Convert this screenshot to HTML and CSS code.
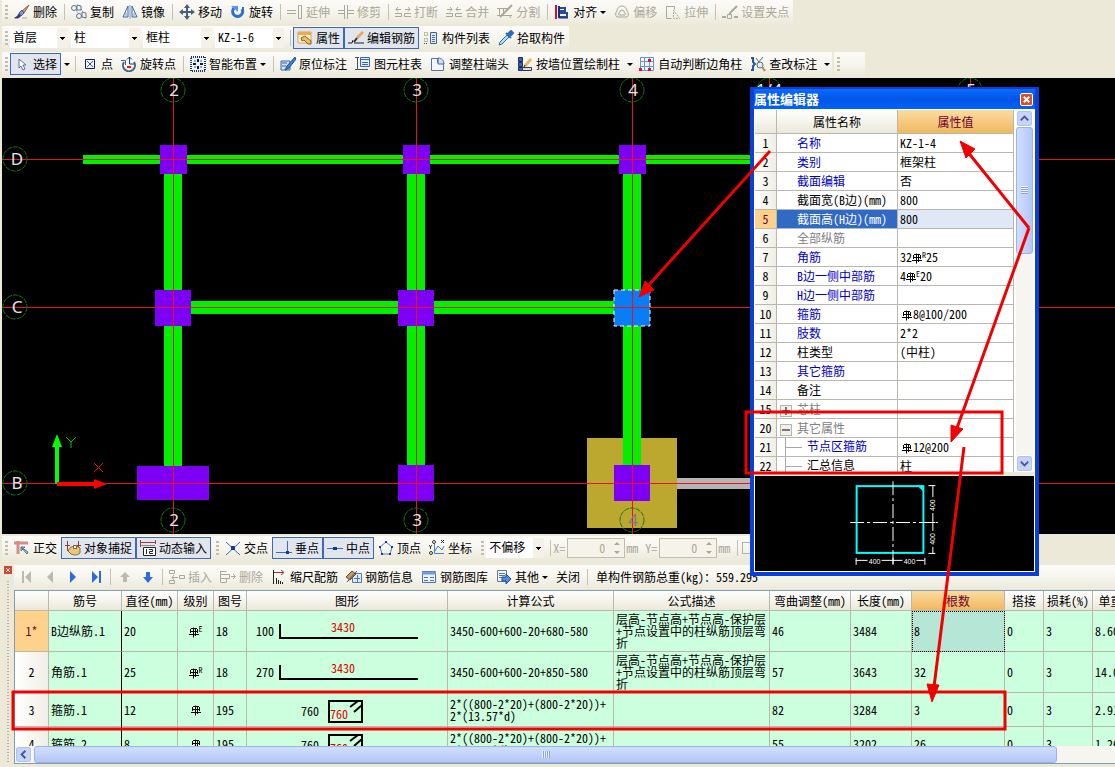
FILE: index.html
```
<!DOCTYPE html>
<html lang="zh-CN">
  <head>
    <meta charset="utf-8">
    <title>钢筋抽样</title>
    <link rel="stylesheet" href="styles.css">
  </head>

  <body>

    <!-- icon sprite -->
    <svg class="sprite">
      <symbol id="brush" viewBox="0 0 16 16">
        <path d="M15 1L8 7l2 2z" fill="#d9a070" stroke="#8a6048"/>
        <path d="M8 6L5 9l2 3 3-3z" fill="#8b95e0" stroke="#4550a8"/>
        <path d="M5 9l-2 3-3 2c2 1 5 1 7-2z" fill="#3c3c74"/>
        <path d="M8 14h5" stroke="#b9a0a0"/>
      </symbol>
      <symbol id="copy" viewBox="0 0 16 16" fill="none" stroke="#5f7391">
        <circle cx="3" cy="4" r="2.5"/><path d="M6 1l4 1v4H6z"/>
        <circle cx="8" cy="12" r="2.5"/><path d="M11 8l4 1v5l-4-1z"/><path d="M5 6l2 3M10 5l2 3" stroke-dasharray="1 1"/>
      </symbol>
      <symbol id="mirror" viewBox="0 0 16 16" fill="none" stroke="#3c66a8">
        <path d="M6 2v11H1zM10 2v11h5z"/><path d="M8 1v14" stroke="#7c9fd0"/><path d="M4 9v3M12 9v3" stroke="#7c9fd0"/>
      </symbol>
      <symbol id="move" viewBox="0 0 16 16" fill="#44607c">
        <path d="M7 3h2v10H7zM3 7h10v2H3z"/><path d="M8 0l3 4H5zM8 16l3-4H5zM0 8l4-3v6zM16 8l-4-3v6z"/>
      </symbol>
      <symbol id="rotate" viewBox="0 0 16 16">
        <path d="M4 4a5 5 0 1 0 8 1" fill="none" stroke="#2f6fd0" stroke-width="3"/>
        <path d="M1 2h7v6z" fill="#5b94e8"/><path d="M13 3v3" stroke="#2f6fd0" stroke-width="2"/>
      </symbol>
      <symbol id="extend" viewBox="0 0 16 16" fill="none" stroke="#aaa899">
        <path d="M0 6.500h9M0 9.500h9M11.500 1.500h3v13h-3z"/>
      </symbol>
      <symbol id="trim" viewBox="0 0 16 16" fill="none" stroke="#aaa899">
        <path d="M0 6.500h6M0 9.500h6M10 6.500h6M10 9.500h6M6.500 1v14M9.500 1v14"/>
      </symbol>
      <symbol id="break" viewBox="0 0 16 16" fill="none" stroke="#aaa899">
        <path d="M0 9.500h6.500v3H0M16 9.500H9.500v3H16"/><path d="M1 5.500h5M10 5.500h5M3 3L1 5.500l2 2M13 3l2 2.500-2 2"/>
      </symbol>
      <symbol id="merge" viewBox="0 0 16 16" fill="none" stroke="#aaa899">
        <path d="M0 9.500h6.500v3H0M16 9.500H9.500v3H16"/><path d="M1 5.500h5M10 5.500h5M4 3l2 2.500-2 2M12 3l-2 2.500 2 2"/>
      </symbol>
      <symbol id="split" viewBox="0 0 16 16" fill="none" stroke="#aaa899">
        <path d="M0 4.500h12M0 11.500h15M2.500 4v8M6.500 4v8M12 11l2 3"/><path d="M15 1L7 9l-4 4" stroke-width="2"/>
      </symbol>
      <symbol id="align" viewBox="0 0 16 16" fill="none">
        <path d="M2 1v14" stroke="#d01030" stroke-width="2"/><path d="M5 2v12" stroke="#15307c" stroke-width="2"/>
        <path d="M6 4h5v3H6M6 9h7v4H6" stroke="#274a9c" stroke-width="2"/><path d="M5 14h9" stroke="#15307c"/>
      </symbol>
      <symbol id="offset" viewBox="0 0 16 16" fill="none" stroke="#aaa899">
        <path d="M3 13a4 4 0 0 1 0-6 5 5 0 0 1 10 0 4 4 0 0 1 0 6z"/><path d="M5 11a2 2 0 0 1 1-3 2 2 0 0 1 4 0 2 2 0 0 1 1 3z"/>
      </symbol>
      <symbol id="stretch" viewBox="0 0 16 16" fill="none" stroke="#aaa899">
        <path d="M1.500 14.500v-12h8v3M1.500 14.500h5"/><path d="M8.500 6l6 8.500h-6z" stroke-dasharray="2 1"/>
      </symbol>
      <symbol id="grippt" viewBox="0 0 16 16" fill="none" stroke="#aaa899">
        <path d="M0 13h4M12 13h4" stroke-width="2"/><path d="M15 2L9 8l-2 3" stroke-width="2"/><path d="M5.500 10.500h4v4h-4z"/>
      </symbol>
      <symbol id="props" viewBox="0 0 16 16">
        <path d="M1 2h13v11H1z" fill="#fff3d8" stroke="#e0a050"/><path d="M1 2h13v3H1z" fill="#f0a848"/>
        <path d="M4 8l4-2 6 5v3h-3L7 10l-2 1z" fill="#f0c060" stroke="#8a5a20"/>
      </symbol>
      <symbol id="editbar" viewBox="0 0 16 16" fill="none">
        <path d="M0 13h4l1-3M6 13h10" stroke="#1c1c1c"/>
        <path d="M15 2L9 8" stroke="#e8a860" stroke-width="3"/><path d="M9 8l-3 4" stroke="#303030" stroke-width="2"/>
      </symbol>
      <symbol id="list" viewBox="0 0 16 16" fill="none">
        <path d="M1.500 2.500h3v3h-3zM1.500 8.500h3v3h-3z" stroke="#78904c" stroke-dasharray="1 1"/><path d="M1 13.500h4" stroke="#405060" stroke-dasharray="1 1"/>
        <path d="M7.500 2.500h6v11h-6z" fill="#dce8f8" stroke="#44688c"/><path d="M9 5.500h3M9 7.500h3M9 9.500h3M9 11.500h3" stroke="#5878a8"/>
      </symbol>
      <symbol id="dropper" viewBox="0 0 16 16">
        <path d="M9 5l2 2-7 7-3 1 1-3z" fill="#b8dcf4" stroke="#2c6cb0"/><path d="M8 3l5 5M10 4l3-3 2 2-3 3z" fill="#2c6cc4" stroke="#2c6cc4" stroke-width="2"/>
      </symbol>
      <symbol id="cursor" viewBox="0 0 16 16">
        <path d="M5 3v9l2-2 2 4 2-1-2-4h3z" fill="#fff" stroke="#5a6fa0"/>
      </symbol>
      <symbol id="point" viewBox="0 0 16 16" fill="none">
        <path d="M3.500 3.500h9v9h-9z" stroke="#1a1a5a"/><path d="M5 5l6 6M11 5l-6 6" stroke="#2a5ac0"/>
      </symbol>
      <symbol id="rotpt" viewBox="0 0 16 16" fill="none">
        <path d="M3 6a6 6 0 1 0 10 0" stroke="#4a6488" stroke-width="2"/><path d="M0 4.500h4.500V9" stroke="#4a6488"/>
        <path d="M8.500 1v7H13M6 3.500L8.500 1 11 3.500" stroke="#1c3c74"/><path d="M6 11h4" stroke="#d02020" stroke-width="2"/>
      </symbol>
      <symbol id="smart" viewBox="0 0 16 16">
        <path d="M1 1h14v14H1z" fill="#eaf4fc" stroke="#203860" stroke-width="2" stroke-dasharray="1 1"/>
        <path d="M8 3v3M8 10v3M3 8h3M10 8h3" stroke="#1c1c1c" stroke-width="2"/><path d="M4 5h2M10 5h2M4 11h2M10 11h2" stroke="#3060c0"/>
      </symbol>
      <symbol id="label" viewBox="0 0 16 16">
        <path d="M1 5h9v9H1z" fill="#d4e4f6" stroke="#3868a0"/><path d="M2 7h5M2 10h4" stroke="#3868a0"/>
        <path d="M15 1L7 10l-2 4 4-2 7-9z" fill="#3e80d8" stroke="#1c4c94"/>
      </symbol>
      <symbol id="coltable" viewBox="0 0 16 16" fill="none">
        <path d="M5.500 1.500h9v9h-9z" fill="#e4eefa" stroke="#3868b0"/><path d="M5 3.500h10M7 6.500h6M7 8.500h6" stroke="#3868b0"/>
        <path d="M2.500 1v13M0 13.500h13M0 1.500h4" stroke="#44506c"/>
      </symbol>
      <symbol id="colend" viewBox="0 0 16 16">
        <path d="M1.500 2.500h6v4h6v8h-12z" fill="#f2f6fc" stroke="#5872a0"/><path d="M8 2c4 0 6 3 6 6H8z" fill="#d4e0f6" stroke="#4464a4"/>
      </symbol>
      <symbol id="wallcol" viewBox="0 0 16 16">
        <path d="M1.500 1.500h4v4h-4zM1.500 6.500h4v4h-4zM1.500 11.500h4v3h-4z" fill="#3c64b4" stroke="#1c2c58"/><path d="M5.500 11.500h9v3h-9z" fill="#d4dcec" stroke="#303848"/>
        <path d="M14 3l-6 7" stroke="#e8b868" stroke-width="3"/><path d="M8 9l-1 2" stroke="#222"/>
      </symbol>
      <symbol id="autojudge" viewBox="0 0 16 16">
        <path d="M1.500 1.500h13v13h-13zM1 5.500h14M1 10.500h14M5.500 1v14M10.500 1v14" fill="#eef6ff" stroke="#6c90c8"/>
        <path d="M9 3h3v3H9zM0 12h3v3H0zM9 12h3v3H9z" fill="#d01838"/>
      </symbol>
      <symbol id="review" viewBox="0 0 16 16" fill="none">
        <path d="M1 2h2v4l2 2-2 2v4H1" stroke="#2458a8" stroke-width="2"/><path d="M6 2l8 11M13 1L7 8" stroke="#5c6c7c"/>
        <circle cx="10" cy="9" r="3" fill="#dff0fc" stroke="#507080"/><path d="M12 11l3 4" stroke="#c08840" stroke-width="2"/>
      </symbol>
      <symbol id="ortho" viewBox="0 0 16 16" fill="none">
        <path d="M0 3h14M4 1v13" stroke="#d88c88" stroke-width="3"/><path d="M7 7l6 7 1-2zM7 7v4l4-4z" stroke="#58708c" fill="#b8cce0"/>
      </symbol>
      <symbol id="snap" viewBox="0 0 16 16">
        <path d="M2.500 1v10M13.500 1v6M0 5.500h5M11 5.500h5" stroke="#8a3c3c" fill="none"/><path d="M5 8c3-3 8-2 10 0v5c-3 3-6 2-9 1l-3-3z" fill="#e8c878" stroke="#8c6c38"/>
        <path d="M8.500 5.500h3v3h-3z" fill="#fff" stroke="#806040"/>
      </symbol>
      <symbol id="dynin" viewBox="0 0 16 16" fill="none">
        <path d="M0 2.500h16M.5 0v7M15.500 0v4" stroke="#9c3c44"/><path d="M1 5.500h14" stroke="#888"/>
        <path d="M3.500 7.500h12v8h-12z" fill="#fff" stroke="#222"/><path d="M6.500 9v5M9 9.500h3.500v2h-3v2H13" stroke="#222"/>
      </symbol>
      <symbol id="cross" viewBox="0 0 16 16" fill="none">
        <path d="M1 2l14 13M15 2L1 15" stroke="#3c6cb4"/><path d="M6 6h4v4H6z" fill="#0c3c94"/>
      </symbol>
      <symbol id="perp" viewBox="0 0 16 16" fill="none">
        <path d="M11.500 1v11M0 12.500h16" stroke="#3c6cb4"/><path d="M10 11h3v3h-3z" fill="#0c3c94"/>
      </symbol>
      <symbol id="mid" viewBox="0 0 16 16">
        <path d="M0 8.500h16" stroke="#3c6cb4"/><path d="M6 7h4v3H6z" fill="#0c3c94"/>
      </symbol>
      <symbol id="vertex" viewBox="0 0 16 16" fill="none">
        <path d="M8 2l6 5-2 7H4L2 7z" stroke="#5080c0"/><path d="M7 1h2v2H7zM1 6h2v2H1zM13 6h2v2h-2zM3 13h2v2H3zM11 13h2v2h-2z" fill="#0c3c94"/>
      </symbol>
      <symbol id="coord" viewBox="0 0 16 16" fill="none">
        <path d="M5.500 4v9.500H15M6 11l3-5 4 4 2-4" stroke="#4880c0"/><circle cx="2" cy="13" r="1.500" stroke="#333"/><circle cx="5" cy="2" r="1.500" stroke="#333"/>
        <path d="M0 5l1.500 2L3 5M1.500 7v2M12 0l3 3M15 0l-3 3" stroke="#333"/>
      </symbol>
      <symbol id="first" viewBox="0 0 16 16" fill="#bcbab0"><path d="M3 2h2v12H3zM12 2v12L6 8z"/></symbol>
      <symbol id="prev" viewBox="0 0 16 16" fill="#bcbab0"><path d="M11 2v12L5 8z"/></symbol>
      <symbol id="next" viewBox="0 0 16 16" fill="#2f6ae0"><path d="M5 2v12l6-6z"/></symbol>
      <symbol id="last" viewBox="0 0 16 16" fill="#2f6ae0"><path d="M4 2v12l6-6zM11 2h2v12h-2z"/></symbol>
      <symbol id="up" viewBox="0 0 16 16" fill="#bcbab0"><path d="M8 3l5 5h-3v5H6V8H3z"/></symbol>
      <symbol id="down" viewBox="0 0 16 16" fill="#2f6ae0"><path d="M8 14L3 8h3V3h4v5h3z"/></symbol>
      <symbol id="insert" viewBox="0 0 16 16" fill="none" stroke="#aaa899">
        <path d="M.5 1.500h5v3h-5zM.5 11.500h5v3h-5zM10.500 6.500h5v3h-5zM3 8.500h6M5 6L3 8.500 5 11"/>
      </symbol>
      <symbol id="delrow" viewBox="0 0 16 16" fill="none" stroke="#aaa899">
        <path d="M.5 2.500h6M.5 13.500h6M.5 2v3M.5 5.500h9v4h-9zM.5 10v3M6.500 10v3M11 7.500h4M13 5l2.500 2.500L13 10"/>
      </symbol>
      <symbol id="scale" viewBox="0 0 16 16" fill="none">
        <path d="M2.500 1v14M5.500 9v6M7.500 11v4M9.500 12v3M11.500 13v2" stroke="#222"/><path d="M3 3.500h9M10 1l3 2.500L10 6" stroke="#a03038"/>
      </symbol>
      <symbol id="barinfo" viewBox="0 0 16 16">
        <path d="M6.500 4.500h9v9h-9z" fill="#dcecfc" stroke="#5078b0"/><path d="M8 9.500h6M11.500 6v7" stroke="#5078b0"/>
        <path d="M0 8l6-6 4 3-6 6z" fill="#c89468" stroke="#704828"/><path d="M1 13L11 2" stroke="#405040"/>
      </symbol>
      <symbol id="barlib" viewBox="0 0 16 16" fill="none">
        <path d="M1.500 2.500h13v11h-13z" fill="#eaf2fc" stroke="#4470b0"/><path d="M1 4h14" stroke="#6c9cdc" stroke-width="3"/><path d="M3 8.500h4M9 8.500h4M3 11.500h4M9 11.500h4" stroke="#607090"/>
      </symbol>
      <symbol id="other" viewBox="0 0 16 16">
        <path d="M1.500 1.500h9v11h-9z" fill="#f4f4f4" stroke="#60789c"/><path d="M3 4.500h6M3 6.500h6M3 8.500h4" stroke="#60789c"/><path d="M6 8h4V5l5 5-5 5v-3H6z" fill="#4c8ce4" stroke="#1c4c9c"/>
      </symbol>
      <symbol id="rebar" viewBox="0 0 10 12" fill="none" stroke="currentColor">
        <path d="M4.500 1.500v10M6.500 2v8M2 2.500h6M1.500 3v4M8.500 3v4M1 5.500h8M0 8.500h10"/>
      </symbol>
    </svg>

    <!-- edit toolbar -->
    <div class="row">
      <div class="toolbar">
        <span class="grip"></span>
        <button class="btn"><svg class="icon"><use href="#brush"/></svg>删除</button>
        <span class="sep"></span>
        <button class="btn"><svg class="icon"><use href="#copy"/></svg>复制</button>
        <button class="btn"><svg class="icon"><use href="#mirror"/></svg>镜像</button>
        <span class="sep"></span>
        <button class="btn"><svg class="icon"><use href="#move"/></svg>移动</button>
        <button class="btn"><svg class="icon"><use href="#rotate"/></svg>旋转</button>
        <span class="sep"></span>
        <button class="btn" disabled><svg class="icon"><use href="#extend"/></svg>延伸</button>
        <button class="btn" disabled><svg class="icon"><use href="#trim"/></svg>修剪</button>
        <span class="sep"></span>
        <button class="btn" disabled><svg class="icon"><use href="#break"/></svg>打断</button>
        <button class="btn" disabled><svg class="icon"><use href="#merge"/></svg>合并</button>
        <button class="btn" disabled><svg class="icon"><use href="#split"/></svg>分割</button>
        <span class="sep"></span>
        <button class="btn drop"><svg class="icon"><use href="#align"/></svg>对齐</button>
        <button class="btn" disabled><svg class="icon"><use href="#offset"/></svg>偏移</button>
        <button class="btn" disabled><svg class="icon"><use href="#stretch"/></svg>拉伸</button>
        <span class="sep"></span>
        <button class="btn" disabled><svg class="icon"><use href="#grippt"/></svg>设置夹点</button>
      </div>
    </div>

    <!-- component toolbar -->
    <div class="row">
      <div class="toolbar">
        <span class="grip"></span>
        <select class="combo short" aria-label="楼层"><option>首层</option></select>
        <select class="combo" aria-label="构件类型"><option>柱</option></select>
        <select class="combo" aria-label="构件种类"><option>框柱</option></select>
        <select class="combo" aria-label="构件名称"><option>KZ-1-6</option></select>
        <span class="sep"></span>
        <button class="btn on"><svg class="icon"><use href="#props"/></svg>属性</button>
        <button class="btn on"><svg class="icon"><use href="#editbar"/></svg>编辑钢筋</button>
        <button class="btn"><svg class="icon"><use href="#list"/></svg>构件列表</button>
        <button class="btn"><svg class="icon"><use href="#dropper"/></svg>拾取构件</button>
      </div>
    </div>

    <!-- drawing toolbar -->
    <div class="row">
      <div class="toolbar">
        <span class="grip"></span>
        <button class="btn on"><svg class="icon"><use href="#cursor"/></svg>选择</button>
        <button class="more" aria-label="选择方式"></button>
        <span class="sep"></span>
        <button class="btn"><svg class="icon"><use href="#point"/></svg>点</button>
        <button class="btn"><svg class="icon"><use href="#rotpt"/></svg>旋转点</button>
        <span class="sep"></span>
        <button class="btn drop"><svg class="icon"><use href="#smart"/></svg>智能布置</button>
        <span class="sep"></span>
        <button class="btn"><svg class="icon"><use href="#label"/></svg>原位标注</button>
        <button class="btn"><svg class="icon"><use href="#coltable"/></svg>图元柱表</button>
        <button class="btn"><svg class="icon"><use href="#colend"/></svg>调整柱端头</button>
        <button class="btn"><svg class="icon"><use href="#wallcol"/></svg>按墙位置绘制柱</button>
        <button class="more" aria-label="更多绘制"></button>
        <button class="btn"><svg class="icon"><use href="#autojudge"/></svg>自动判断边角柱</button>
        <button class="btn"><svg class="icon"><use href="#review"/></svg>查改标注</button>
        <button class="more" aria-label="更多标注"></button>
      </div>
      <div class="toolbar stub"><span class="grip"></span></div>
    </div>

    <!-- plan view -->
    <svg class="plan">
      <g class="beam">
        <rect x="81" y="77" width="680" height="9"/>
        <rect x="162" y="96" width="18" height="292"/>
        <rect x="405" y="96" width="18" height="292"/>
        <rect x="189" y="223" width="424" height="13"/>
      </g>
      <rect class="slab" x="585" y="360" width="90" height="90"/>
      <rect class="beam" x="621" y="96" width="18" height="292"/>
      <rect class="ground" x="675" y="400" width="90" height="11"/>
      <g class="column">
        <rect x="158" y="67" width="27" height="29"/>
        <rect x="401" y="67" width="27" height="29"/>
        <rect x="617" y="67" width="27" height="29"/>
        <rect x="153" y="212" width="36" height="36"/>
        <rect x="396" y="212" width="36" height="36"/>
        <rect x="135" y="388" width="72" height="34"/>
        <rect x="396" y="387" width="36" height="36"/>
        <rect x="612" y="387" width="36" height="36"/>
      </g>
      <rect class="picked" x="612" y="212" width="36" height="36"/>
      <g class="axis">
        <rect x="171" width="1" height="100%"/>
        <rect x="414" width="1" height="100%"/>
        <rect x="630" width="1" height="100%"/>
        <rect x="767" width="1" height="30"/>
        <rect x="968" width="1" height="30"/>
        <rect y="81" width="100%" height="1"/>
        <rect y="229" width="100%" height="1"/>
        <rect y="405" width="100%" height="1"/>
      </g>
      <g class="bubble">
        <circle cx="171" cy="12" r="12"/><circle cx="414" cy="12" r="12"/><circle cx="630" cy="12" r="12"/>
        <circle cx="767" cy="12" r="12"/><circle cx="968" cy="12" r="12"/>
        <circle cx="171" cy="442" r="12"/><circle cx="414" cy="442" r="12"/><circle cx="630" cy="442" r="12"/>
        <circle cx="13" cy="81" r="12"/><circle cx="13" cy="229" r="12"/><circle cx="13" cy="405" r="12"/>
      </g>
      <g class="axisno">
        <text x="172" y="18">2</text><text x="415" y="18">3</text><text x="631" y="18">4</text>
        <text x="767" y="18">1/4</text><text x="969" y="18">5</text>
        <text x="172" y="448">2</text><text x="415" y="448">3</text><text x="631" y="448" class="dim">4</text>
        <text x="15" y="87">D</text><text x="15" y="235">C</text><text x="15" y="411">B</text>
      </g>
      <path d="M55 406V368" stroke="#0f0" stroke-width="4"/><path d="M55 356l5 13H50z" fill="#0f0"/>
      <path d="M55 406h37" stroke="#f00" stroke-width="4"/><path d="M105 406l-13-5v10z" fill="#f00"/>
      <path d="M64 359l5 5 5-5M69 364v6" stroke="#0c0" fill="none"/>
      <path d="M92 385l9 9M101 385l-9 9" stroke="#f01010"/>
    </svg>

    <!-- snap toolbar -->
    <div class="row snap-row">
      <div class="toolbar">
        <span class="grip"></span>
        <button class="btn"><svg class="icon"><use href="#ortho"/></svg>正交</button>
        <button class="btn on"><svg class="icon"><use href="#snap"/></svg>对象捕捉</button>
        <button class="btn on"><svg class="icon"><use href="#dynin"/></svg>动态输入</button>
        <span class="grip mid"></span>
        <button class="btn"><svg class="icon"><use href="#cross"/></svg>交点</button>
        <button class="btn on"><svg class="icon"><use href="#perp"/></svg>垂点</button>
        <button class="btn on"><svg class="icon"><use href="#mid"/></svg>中点</button>
        <button class="btn"><svg class="icon"><use href="#vertex"/></svg>顶点</button>
        <button class="btn"><svg class="icon"><use href="#coord"/></svg>坐标</button>
        <span class="grip mid"></span>
        <select class="combo short" aria-label="偏移方式"><option>不偏移</option></select>
        <span class="sep"></span>
        <label class="off" for="dx">X=</label>
        <span class="spin"><input id="dx" type="text" value="0" disabled><svg viewBox="0 0 8 14"><path d="M1 4l3-3 3 3zM1 10l3 3 3-3z"/></svg></span>
        <span class="off unit">mm</span>
        <label class="off" for="dy">Y=</label>
        <span class="spin"><input id="dy" type="text" value="0" disabled><svg viewBox="0 0 8 14"><path d="M1 4l3-3 3 3zM1 10l3 3 3-3z"/></svg></span>
        <span class="off unit">mm</span>
        <span class="sep"></span>
        <input class="tick" type="checkbox" aria-label="旋转" disabled>
      </div>
    </div>

    <!-- rebar editor -->
    <div class="editor">
      <div class="dock"><button class="dock-close" aria-label="关闭面板"><svg viewBox="0 0 8 8"><path d="M2 2l4 4M6 2L2 6"/></svg></button></div>
      <div class="editor-main">
        <div class="toolbar wide">
          <button class="nav" aria-label="首条"><svg class="icon"><use href="#first"/></svg></button>
          <button class="nav" aria-label="上一条"><svg class="icon"><use href="#prev"/></svg></button>
          <button class="nav" aria-label="下一条"><svg class="icon"><use href="#next"/></svg></button>
          <button class="nav" aria-label="末条"><svg class="icon"><use href="#last"/></svg></button>
          <span class="sep"></span>
          <button class="nav" aria-label="上移"><svg class="icon"><use href="#up"/></svg></button>
          <button class="nav" aria-label="下移"><svg class="icon"><use href="#down"/></svg></button>
          <span class="sep"></span>
          <button class="btn" disabled><svg class="icon"><use href="#insert"/></svg>插入</button>
          <button class="btn" disabled><svg class="icon"><use href="#delrow"/></svg>删除</button>
          <button class="btn"><svg class="icon"><use href="#scale"/></svg>缩尺配筋</button>
          <button class="btn"><svg class="icon"><use href="#barinfo"/></svg>钢筋信息</button>
          <button class="btn"><svg class="icon"><use href="#barlib"/></svg>钢筋图库</button>
          <button class="btn drop"><svg class="icon"><use href="#other"/></svg>其他</button>
          <button class="btn">关闭</button>
          <span class="sep"></span>
          <span class="total">单构件钢筋总重(kg)：559.295</span>
        </div>

        <div class="sheet">
          <div class="sheet-view">
            <table class="bars">
              <colgroup>
                <col class="w-no"><col class="w-name"><col class="w-dia"><col class="w-grade"><col class="w-fig"><col class="w-shape"><col class="w-calc">
                <col class="w-desc"><col class="w-bend"><col class="w-len"><col class="w-count"><col class="w-lap"><col class="w-loss"><col class="w-unit">
              </colgroup>
              <thead>
                <tr><th></th><th>筋号</th><th>直径(mm)</th><th>级别</th><th>图号</th><th>图形</th><th>计算公式</th><th>公式描述</th><th>弯曲调整(mm)</th><th>长度(mm)</th><th class="hot">根数</th><th>搭接</th><th>损耗(%)</th><th>单重(kg)</th></tr>
              </thead>
              <tbody>
                <tr class="tall">
                  <th class="cur">1*</th><td>B边纵筋.1</td><td>20</td><td class="mid"><svg class="rebar"><use href="#rebar"/></svg><sup>E</sup></td><td>18</td>
                  <td class="shape"><svg class="fig"><text x="9" y="25">100</text><text class="r" x="84" y="21">3430</text><path d="M33 13v14h138"/></svg></td>
                  <td>3450-600+600-20+680-580</td><td>层高-节点高+节点高-保护层<br>+节点设置中的柱纵筋顶层弯<br>折</td><td>46</td><td>3484</td><td class="sel">8</td><td>0</td><td>3</td><td>8.603</td>
                </tr>
                <tr class="tall">
                  <th>2</th><td>角筋.1</td><td>25</td><td class="mid"><svg class="rebar"><use href="#rebar"/></svg><sup>R</sup></td><td>18</td>
                  <td class="shape"><svg class="fig"><text x="9" y="25">270</text><text class="r" x="84" y="21">3430</text><path d="M33 13v14h138"/></svg></td>
                  <td>3450-600+600-20+850-580</td><td>层高-节点高+节点高-保护层<br>+节点设置中的柱纵筋顶层弯<br>折</td><td>57</td><td>3643</td><td>32</td><td>0</td><td>3</td><td>14.026</td>
                </tr>
                <tr>
                  <th>3</th><td>箍筋.1</td><td>12</td><td class="mid"><svg class="rebar"><use href="#rebar"/></svg></td><td>195</td>
                  <td class="shape"><svg class="fig low"><text x="54" y="23">760</text><text class="r" x="83" y="26">760</text><path d="M82 8h33v21H82zM103 14l8-6M107 19l8-7"/></svg></td>
                  <td>2*((800-2*20)+(800-2*20))+<br>2*(13.57*d)</td><td></td><td>82</td><td>3284</td><td>3</td><td>0</td><td>3</td><td>2.916</td>
                </tr>
                <tr>
                  <th>4</th><td>箍筋.2</td><td>8</td><td class="mid"><svg class="rebar"><use href="#rebar"/></svg></td><td>195</td>
                  <td class="shape"><svg class="fig low"><text x="54" y="23">760</text><text class="r" x="83" y="26">760</text><path d="M82 8h33v21H82zM103 14l8-6M107 19l8-7"/></svg></td>
                  <td>2*((800-2*20)+(800-2*20))+<br>2*(11.9*d)</td><td></td><td>55</td><td>3202</td><td>26</td><td>0</td><td>3</td><td>1.265</td>
                </tr>
              </tbody>
            </table>
          </div>
          <div class="hscroll">
            <button class="sb" aria-label="向左"><svg viewBox="0 0 16 16"><path d="M10 4L6 8l4 4"/></svg></button>
            <div class="hthumb"><i></i></div>
            <div class="hrest"></div>
          </div>
        </div>
      </div>
    </div>

    <!-- property window -->
    <section class="window">
      <header class="caption">
        <h1>属性编辑器</h1>
        <button class="close" aria-label="关闭"><svg viewBox="0 0 12 12"><path d="M3 3l6 6M9 3l-6 6"/></svg></button>
      </header>
      <div class="pane">
        <div class="prop-view">
          <table class="props">
            <colgroup><col class="p-no"><col class="p-name"><col></colgroup>
            <thead><tr><th></th><th>属性名称</th><th class="hot">属性值</th></tr></thead>
            <tbody>
              <tr><th>1</th><td class="k blue">名称</td><td>KZ-1-4</td></tr>
              <tr><th>2</th><td class="k blue">类别</td><td>框架柱</td></tr>
              <tr><th>3</th><td class="k blue">截面编辑</td><td>否</td></tr>
              <tr><th>4</th><td class="k">截面宽(B边)(mm)</td><td>800</td></tr>
              <tr class="active"><th>5</th><td class="k">截面高(H边)(mm)</td><td>800</td></tr>
              <tr><th>6</th><td class="k gray">全部纵筋</td><td></td></tr>
              <tr><th>7</th><td class="k blue">角筋</td><td>32<svg class="rebar"><use href="#rebar"/></svg><sup>R</sup>25</td></tr>
              <tr><th>8</th><td class="k blue">B边一侧中部筋</td><td>4<svg class="rebar"><use href="#rebar"/></svg><sup>E</sup>20</td></tr>
              <tr><th>9</th><td class="k blue">H边一侧中部筋</td><td></td></tr>
              <tr><th>10</th><td class="k blue">箍筋</td><td><svg class="rebar lead"><use href="#rebar"/></svg>8@100/200</td></tr>
              <tr><th>11</th><td class="k blue">肢数</td><td>2*2</td></tr>
              <tr><th>12</th><td class="k">柱类型</td><td>(中柱)</td></tr>
              <tr><th>13</th><td class="k blue">其它箍筋</td><td></td></tr>
              <tr><th>14</th><td class="k">备注</td><td></td></tr>
              <tr><th>15</th><td class="k group gray"><button class="fold" aria-label="展开"><svg viewBox="0 0 10 10"><path d="M1 5h8M5 1v8"/></svg></button>芯柱</td><td></td></tr>
              <tr><th>20</th><td class="k group gray"><button class="fold" aria-label="折叠"><svg viewBox="0 0 10 10"><path d="M1 5h8"/></svg></button>其它属性</td><td></td></tr>
              <tr><th>21</th><td class="k child blue"><svg class="twig"><path d="M0.500 0v19M0 9.500h17"/></svg>节点区箍筋</td><td><svg class="rebar lead"><use href="#rebar"/></svg>12@200</td></tr>
              <tr><th>22</th><td class="k child"><svg class="twig"><path d="M0.500 0v19M0 9.500h17"/></svg>汇总信息</td><td>柱</td></tr>
            </tbody>
          </table>
        </div>
        <div class="vscroll">
          <button class="sb" aria-label="向上"><svg viewBox="0 0 16 16"><path d="M4 10l4-4 4 4"/></svg></button>
          <div class="vthumb"><i></i></div>
          <div class="vrest"></div>
          <button class="sb" aria-label="向下"><svg viewBox="0 0 16 16"><path d="M4 6l4 4 4-4"/></svg></button>
        </div>
      </div>
      <!-- column section -->
      <svg class="section" viewBox="0 0 280 95">
        <rect x="102" y="10" width="67" height="67" fill="none" stroke="#0ff" stroke-width="2"/>
        <path d="M164 10h5v5z" fill="#0ff" stroke="#0ff"/>
        <g stroke="#fff" fill="none">
          <path d="M95.500 46.500h88" stroke-dasharray="14 3 3 3"/><path d="M138.500 5v84" stroke-dasharray="14 3 3 3"/>
          <path d="M101.500 82v7M138.500 82v7M170.500 82v7M101 84.500h12M127 84.500h21M162 84.500h8"/>
          <path d="M174 9.500h7M174 46.500h7M174 77.500h7M178.500 9v12M178.500 37v18M178.500 71v7"/>
        </g>
        <g class="dims">
          <text x="120" y="88">400</text><text x="155" y="88">400</text>
          <text transform="translate(181 29) rotate(-90)">400</text><text transform="translate(181 63) rotate(-90)">400</text>
        </g>
      </svg>
    </section>

    <!-- callouts -->
    <svg class="marks">
      <path d="M770 151L646 288M1029 228L967 151M1029 228L957 428M964 447L934 687"/>
      <rect x="746" y="412" width="256" height="61"/>
      <rect x="13" y="692" width="992" height="37"/>
      <g class="heads">
        <path d="M639 297l6-16 9 9z"/><path d="M960 141l15 8-9 9z"/><path d="M951 442l0-17 12 4z"/><path d="M932 702l-5-18 12 1z"/>
      </g>
    </svg>

  </body>
</html>
```
FILE: styles.css
```
* {
  box-sizing: border-box;
}

body {
  margin: 0;
  height: 100vh;
  display: flex;
  flex-direction: column;
  position: relative;
  overflow: hidden;
  background: #ece9d8;
  color: #000;
  font-family: "Noto Sans Mono CJK SC", "Noto Sans CJK SC", sans-serif;
  font-size: 12px;
  line-height: 14px;
}

button, select, input {
  font: inherit;
  color: inherit;
  margin: 0;
}

.sprite {
  position: absolute;
  width: 0;
  height: 0;
}

.icon {
  width: 16px;
  height: 16px;
  flex: none;
}

/* toolbars */

.row {
  display: flex;
  flex: none;
  gap: 2px;
  margin: 0 0 2px 2px;
}

.toolbar {
  display: flex;
  align-items: center;
  height: 24px;
  padding-left: 3px;
  background: linear-gradient(#fcfbf8, #f6f5ee 50%, #eceadb);
  white-space: nowrap;
}

.toolbar.wide {
  padding-left: 1px;
}

.toolbar.stub {
  width: 31px;
}

.grip {
  flex: none;
  width: 3px;
  height: 15px;
  margin-right: 2px;
  background: repeating-linear-gradient(#c1beae 0 2px, transparent 2px 4px);
}

.grip.mid {
  margin: 0 2px 0 5px;
}

.sep {
  flex: none;
  width: 1px;
  height: 16px;
  margin: 0 2px 0 3px;
  background: #c5c2b2;
}

.btn {
  display: flex;
  align-items: center;
  gap: 3px;
  height: 22px;
  padding: 0 4px;
  border: none;
  background: none;
  flex: none;
}

.btn:disabled {
  color: #aca899;
}

.btn.on {
  background: #e1e6ee;
  box-shadow: inset 0 0 0 1px #4068b8;
}

.drop::after,
.more::after {
  content: "";
  border: 3px solid transparent;
  border-top-color: #000;
  border-bottom: none;
}

.more {
  display: flex;
  align-items: center;
  justify-content: center;
  width: 11px;
  height: 22px;
  padding: 0;
  border: none;
  background: none;
}

.nav {
  display: flex;
  align-items: center;
  justify-content: center;
  width: 23px;
  height: 22px;
  padding: 0;
  border: none;
  background: none;
}

.combo {
  appearance: none;
  width: 69px;
  height: 20px;
  margin-right: 3px;
  padding: 0 0 2px 3px;
  border: none;
  border-radius: 0;
  background:
    linear-gradient(#000, #000) right 3px top 9px / 5px 1px no-repeat,
    linear-gradient(#000, #000) right 4px top 10px / 3px 1px no-repeat,
    linear-gradient(#000, #000) right 5px top 11px / 1px 1px no-repeat,
    linear-gradient(90deg, #f3f1e8, #f3f1e8) right / 11px 20px no-repeat,
    #fff;
}

.combo.short {
  width: 58px;
}

.total {
  margin-left: 6px;
}

/* plan view */

.plan {
  display: block;
  flex: 1;
  min-height: 0;
  width: calc(100% - 2px);
  margin-left: 2px;
  background: #000;
}

.beam { fill: #00f000; }
.slab { fill: #bda82f; }
.ground { fill: #b9b4b4; }
.column { fill: #7d00f5; }

.picked {
  fill: #0a7cf4;
  stroke: #fff;
  stroke-dasharray: 4 3;
}

.axis {
  fill: #e0181c;
}

.bubble {
  fill: none;
  stroke: #0d7a12;
  stroke-dasharray: 5 1;
}

.axisno {
  fill: #e4e4e4;
  font-family: "Noto Sans", sans-serif;
  font-size: 17px;
  text-anchor: middle;
}

.axisno .dim {
  fill: #7a7a8c;
}

/* snap toolbar */

.snap-row {
  margin-top: 2px;
  margin-bottom: 5px;
}

.off {
  color: #aca899;
  margin-right: 2px;
}

.off.unit {
  margin: 0 7px 0 1px;
}

.off.unit + .sep {
  margin-left: 0;
}

.spin {
  display: flex;
  align-items: center;
  width: 58px;
  height: 20px;
  border: 1px solid #c0bdae;
  background: #f5f3ea;
}

.spin input {
  flex: 1;
  min-width: 0;
  padding: 0 8px 0 0;
  border: none;
  background: none;
  color: #aca899;
  text-align: right;
}

.spin svg {
  width: 8px;
  height: 14px;
  margin-right: 3px;
  fill: #aca899;
}

.tick {
  appearance: none;
  width: 12px;
  height: 12px;
  margin: 0 4px 0 2px;
  border: 1px solid #b5b2a3;
}

/* rebar editor */

.editor {
  display: flex;
  flex: none;
  height: 202px;
}

.dock {
  flex: none;
  width: 14px;
  padding: 1px 0 4px 4px;
  display: flex;
  flex-direction: column;
}

.dock::after {
  content: "";
  flex: 1;
  width: 2px;
  margin: 7px 0 0 3px;
  background: repeating-linear-gradient(#b5b2a0 0 1px, transparent 1px 3px);
}

.dock-close {
  width: 8px;
  height: 8px;
  padding: 0;
  border: none;
  background: #d04630;
  display: flex;
}

.dock-close svg {
  stroke: #fff;
}

.editor-main {
  flex: 1;
  min-width: 0;
  display: flex;
  flex-direction: column;
}

.sheet {
  flex: 1;
  min-height: 0;
  display: flex;
  flex-direction: column;
  margin: 1px 0 3px;
  border: 1px solid #7f9db9;
  border-right: none;
  background: #fff;
}

.sheet-view {
  flex: 1;
  min-height: 0;
  overflow: hidden;
}

table {
  border-spacing: 0;
  table-layout: fixed;
}

th, td {
  padding: 0;
  border: solid #b8b8b0;
  border-width: 0 1px 1px 0;
  font-weight: normal;
  text-align: left;
  white-space: nowrap;
  overflow: hidden;
}

th {
  text-align: center;
  background: linear-gradient(#fff, #ebe8da);
}

tbody th {
  background: linear-gradient(90deg, #fff, #f0eee4);
}

th.hot {
  color: #6c0030;
  background: linear-gradient(#fbdca0, #f0b860);
}

.bars {
  width: 1138px;
  line-height: 12px;
}

.w-no { width: 34px; }
.w-name { width: 73px; }
.w-dia { width: 56px; }
.w-grade { width: 36px; }
.w-fig { width: 33px; }
.w-shape { width: 201px; }
.w-calc { width: 166px; }
.w-desc { width: 156px; }
.w-bend { width: 81px; }
.w-len { width: 61px; }
.w-count { width: 93px; }
.w-lap { width: 39px; }
.w-loss { width: 49px; }
.w-unit { width: 60px; }

.bars thead th {
  height: 20px;
}

.bars tbody tr {
  height: 34px;
}

.bars tbody tr.tall {
  height: 41px;
}

.bars td {
  padding-left: 2px;
  background: #ccffdd;
}

.bars td:nth-child(2) {
  border-right-color: #000;
}

.bars td.mid {
  padding: 0;
  text-align: center;
}

.bars td.shape {
  padding: 0;
}

.bars td.sel {
  background: #b5e6d6;
  outline: 1px dotted #000;
  outline-offset: -1px;
}

th.cur {
  background: #ffd28c;
  color: #6c0030;
}

.fig {
  display: block;
  width: 200px;
  height: 40px;
}

.fig.low {
  height: 33px;
}

.fig path {
  fill: none;
  stroke: #000;
  stroke-width: 2;
}

.fig .r {
  fill: #e00000;
}

.rebar {
  width: 10px;
  height: 12px;
  vertical-align: -2px;
}

.rebar.lead {
  margin: 0 1px 0 2px;
}

sup {
  font-size: 8px;
  line-height: 8px;
  vertical-align: 4px;
}

.sb {
  flex: none;
  width: 17px;
  height: 17px;
  padding: 0;
  border: 1px solid #fff;
  border-radius: 3px;
  background: #c6d4fa;
  box-shadow: inset 0 0 0 1px #b0c2f0;
}

.sb svg {
  display: block;
  width: 15px;
  height: 15px;
  fill: none;
  stroke: #44598c;
  stroke-width: 2;
}

.hscroll {
  display: flex;
  height: 17px;
  background: #f6f5f0;
}

.hthumb {
  flex: 1023;
  margin-left: 2px;
  display: flex;
  align-items: center;
  justify-content: center;
  border: 1px solid #9db2e8;
  border-radius: 3px;
  background: linear-gradient(#d0dffe, #c0d0fb 60%, #b4c6f4);
}

.hrest {
  flex: 58;
}

.hthumb i {
  width: 8px;
  height: 7px;
  background: repeating-linear-gradient(90deg, #eef4ff 0 1px, #8ca4dc 1px 2px);
}

/* property window */

.window {
  position: absolute;
  left: 750px;
  top: 87px;
  width: 289px;
  display: flex;
  flex-direction: column;
  border: 4px solid #0a3fdc;
  border-top-width: 2px;
  background: #fff;
}

.caption {
  display: flex;
  align-items: center;
  justify-content: space-between;
  height: 20px;
  padding-right: 2px;
  background: linear-gradient(#0a6cff, #0055e5 50%, #0062fa);
  color: #fff;
}

.caption h1 {
  margin: 0;
  font-size: 13px;
  font-weight: bold;
}

.close {
  width: 13px;
  height: 13px;
  padding: 0;
  border: 1px solid #fff;
  border-radius: 2px;
  background: #d8502c;
}

.close svg {
  display: block;
  stroke: #fff;
  stroke-width: 2;
}

.pane {
  display: flex;
  justify-content: space-between;
  height: 363px;
  padding: 0 2px 0 1px;
  border-top: 1px solid #fff;
}

.prop-view {
  flex: 1;
  overflow: hidden;
}

.props {
  width: 100%;
}

.p-no { width: 22px; }
.p-name { width: 121px; }

.props thead th {
  height: 24px;
}

.props tbody tr {
  height: 19px;
}

.props td {
  padding-left: 2px;
}

.props td.k {
  padding-left: 20px;
}

.props td.k.group {
  padding-left: 3px;
}

.props td.k.child {
  padding-left: 8px;
}

.blue { color: #0000c8; }
.gray { color: #808080; }

.active th {
  background: #ffd28c;
  color: #6c0030;
}

.active td {
  background: #dfe8f4;
}

.active td.k {
  background: #316ac5;
  color: #fff;
}

.fold {
  display: inline-block;
  width: 12px;
  height: 12px;
  margin-right: 5px;
  padding: 0;
  border: 1px solid #b4b4b4;
  background: #f2f0e8;
  vertical-align: -2px;
}

.fold svg {
  display: block;
  width: 10px;
  height: 10px;
  stroke: #000;
}

.twig {
  width: 17px;
  height: 18px;
  margin-right: 5px;
  stroke: #a8a8a8;
  vertical-align: -5px;
}

.vscroll {
  display: flex;
  flex-direction: column;
  width: 17px;
  margin-left: 2px;
  background: #f6f5f0;
}

.vthumb {
  flex: 125;
  display: flex;
  align-items: center;
  justify-content: center;
  border: 1px solid #9db2e8;
  border-radius: 3px;
  background: linear-gradient(90deg, #d0dffe, #c0d0fb 60%, #b4c6f4);
}

.vthumb i {
  width: 7px;
  height: 8px;
  background: repeating-linear-gradient(#eef4ff 0 1px, #8ca4dc 1px 2px);
}

.vrest {
  flex: 202;
}

.section {
  display: block;
  height: 100px;
  border: 1px solid #fff;
  border-top: 4px solid #ece9d8;
  background: #000;
}

.dims {
  fill: #fff;
  font-family: "Liberation Sans", sans-serif;
  font-size: 7px;
  text-anchor: middle;
}

/* callouts */

.marks {
  position: absolute;
  left: 0;
  top: 0;
  width: 100%;
  height: 100%;
  pointer-events: none;
  fill: none;
  stroke: #f00000;
  stroke-width: 3;
}

.heads {
  fill: #f00000;
  stroke-width: 1;
}
```
